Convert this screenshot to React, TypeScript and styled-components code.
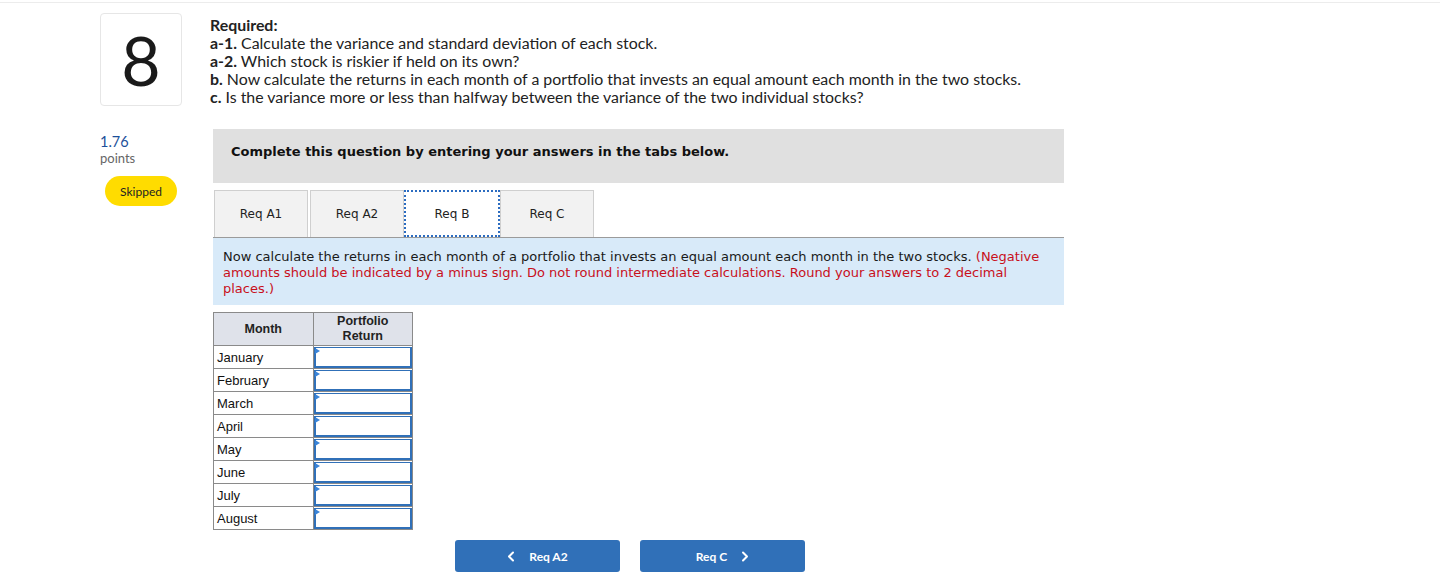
import React from "react";
import styled, { createGlobalStyle } from "styled-components";

const GlobalStyle = createGlobalStyle`
  html, body {
    margin: 0;
    padding: 0;
    background: #fff;
  }
  body {
    font-family: "Lato", "Liberation Sans", sans-serif;
    color: #222;
  }
`;

const Page = styled.div`
  width: 1440px;
  height: 587px;
  overflow: hidden;
  padding-top: 2px;
  box-sizing: border-box;
`;

const Wrap = styled.div`
  border-top: 1px solid #ececec;
  padding: 10px 0 0 100px;
`;

const Header = styled.div`
  display: flex;
  align-items: flex-start;
  column-gap: 28px;
`;

const NumberBox = styled.div`
  width: 82px;
  height: 93px;
  box-sizing: border-box;
  border: 1px solid #e6e6e6;
  border-radius: 4px;
  display: flex;
  align-items: center;
  justify-content: center;
  font-size: 68px;
  font-weight: 400;
  color: #1a1a1a;
  line-height: 1;
`;

const Required = styled.div`
  padding-top: 3px;
  font-size: 15.9px;
  line-height: 18px;
  color: #222;
`;

const Line = styled.div`
  white-space: nowrap;
  b {
    font-weight: 700;
  }
`;

const Body = styled.div`
  display: flex;
  margin-top: 23px;
`;

const Side = styled.div`
  width: 113px;
  padding-top: 5px;
`;

const Score = styled.div`
  font-size: 14.5px;
  line-height: 16px;
  color: #1c4f9a;
`;

const Points = styled.div`
  font-size: 13px;
  line-height: 16px;
  color: #666;
`;

const Badge = styled.div`
  margin: 10px 0 0 5px;
  width: 72px;
  height: 30px;
  border-radius: 15px;
  background: #ffdc00;
  display: flex;
  align-items: center;
  justify-content: center;
  font-size: 12px;
  color: #222;
`;

const Main = styled.div`
  width: 851px;
  font-family: "DejaVu Sans", Verdana, sans-serif;
`;

const Banner = styled.div`
  height: 54px;
  box-sizing: border-box;
  background: #e0e0e0;
  padding: 15px 18px;
  font-size: 13px;
  font-weight: 700;
  color: #111;
`;

const Tabs = styled.div`
  display: flex;
  margin-top: 7px;
  padding-left: 1px;
  border-bottom: 1px solid #9b9b9b;
`;

const Tab = styled.div<{ $active?: boolean; $gap?: number }>`
  width: ${p => (p.$active ? 96 : 94)}px;
  height: 47px;
  box-sizing: border-box;
  margin-right: ${p => p.$gap ?? 0}px;
  display: flex;
  align-items: center;
  justify-content: center;
  font-size: 12px;
  color: #222;
  background: ${p => (p.$active ? "#fff" : "#f2f2f2")};
  border: ${p => (p.$active ? "2px dotted #2c6cc0" : "1px solid #cfcfcf")};
  border-bottom: ${p => (p.$active ? "2px dotted #2c6cc0" : "none")};
  margin-bottom: ${p => (p.$active ? "-1px" : "0")};
  position: relative;
`;

const Instructions = styled.div`
  background: #d8eaf9;
  padding: 11px 10px 8px 10px;
  font-size: 13px;
  line-height: 16px;
  color: #1a1a1a;
`;

const Red = styled.span`
  color: #c8101c;
`;

const Table = styled.table`
  margin-top: 7px;
  border-collapse: collapse;
  font-family: "Liberation Sans", Arial, sans-serif;
  width: 200px;
  border: 1px solid #8a8a8a;
`;

const Th = styled.th`
  height: 32px;
  width: 99px;
  background: #dfe2ea;
  border: 1px solid #8a8a8a;
  font-size: 12.5px;
  font-weight: 700;
  line-height: 15px;
  color: #222;
  padding: 0;
`;

const Td = styled.td`
  height: 22px;
  border: 1px solid #8a8a8a;
  font-size: 13px;
  color: #111;
  padding: 0 0 0 3px;
  vertical-align: middle;
`;

const InputTd = styled.td`
  height: 22px;
  border: 1px solid #8a8a8a;
  padding: 0;
`;

const InputBox = styled.div`
  position: relative;
  height: 21px;
  box-sizing: border-box;
  border: 2px solid #3070b8;
  border-top-width: 1px;
  background: #fff;
  &::before {
    content: "";
    position: absolute;
    left: -1px;
    top: 0;
    border-left: 5px solid #3a84d8;
    border-top: 3px solid transparent;
    border-bottom: 3px solid transparent;
  }
`;

const Nav = styled.div`
  display: flex;
  column-gap: 20px;
  margin: 10px 0 0 242px;
`;

const NavButton = styled.div`
  width: 165px;
  height: 32px;
  border-radius: 3px;
  background: #3070b8;
  color: #fff;
  display: flex;
  align-items: center;
  justify-content: center;
  column-gap: 14px;
  font-family: "Lato", "Liberation Sans", sans-serif;
  font-size: 12px;
  font-weight: 700;
`;

const Chevron = ({ dir }: { dir: "left" | "right" }) => (
  <svg width="8" height="11" viewBox="0 0 8 11" fill="none">
    <path
      d={dir === "left" ? "M6 1.5 L2 5.5 L6 9.5" : "M2 1.5 L6 5.5 L2 9.5"}
      stroke="#fff"
      strokeWidth="2"
      strokeLinecap="round"
      strokeLinejoin="round"
    />
  </svg>
);

const months = ["January", "February", "March", "April", "May", "June", "July", "August"];

export default function App() {
  return (
    <Page>
      <GlobalStyle />
      <Wrap>
        <Header>
          <NumberBox>8</NumberBox>
          <Required>
            <Line><b>Required:</b></Line>
            <Line><b>a-1.</b> Calculate the variance and standard deviation of each stock.</Line>
            <Line><b>a-2.</b> Which stock is riskier if held on its own?</Line>
            <Line><b>b.</b> Now calculate the returns in each month of a portfolio that invests an equal amount each month in the two stocks.</Line>
            <Line><b>c.</b> Is the variance more or less than halfway between the variance of the two individual stocks?</Line>
          </Required>
        </Header>
        <Body>
          <Side>
            <Score>1.76</Score>
            <Points>points</Points>
            <Badge>Skipped</Badge>
          </Side>
          <Main>
            <Banner>Complete this question by entering your answers in the tabs below.</Banner>
            <Tabs>
              <Tab $gap={2}>Req A1</Tab>
              <Tab>Req A2</Tab>
              <Tab $active>Req B</Tab>
              <Tab>Req C</Tab>
            </Tabs>
            <Instructions>
              Now calculate the returns in each month of a portfolio that invests an equal amount each month in the two stocks.{" "}
              <Red>(Negative amounts should be indicated by a minus sign. Do not round intermediate calculations. Round your answers to 2 decimal places.)</Red>
            </Instructions>
            <Table>
              <thead>
                <tr>
                  <Th>Month</Th>
                  <Th>Portfolio<br />Return</Th>
                </tr>
              </thead>
              <tbody>
                {months.map(m => (
                  <tr key={m}>
                    <Td>{m}</Td>
                    <InputTd><InputBox /></InputTd>
                  </tr>
                ))}
              </tbody>
            </Table>
            <Nav>
              <NavButton><Chevron dir="left" />Req A2</NavButton>
              <NavButton>Req C<Chevron dir="right" /></NavButton>
            </Nav>
          </Main>
        </Body>
      </Wrap>
    </Page>
  );
}
